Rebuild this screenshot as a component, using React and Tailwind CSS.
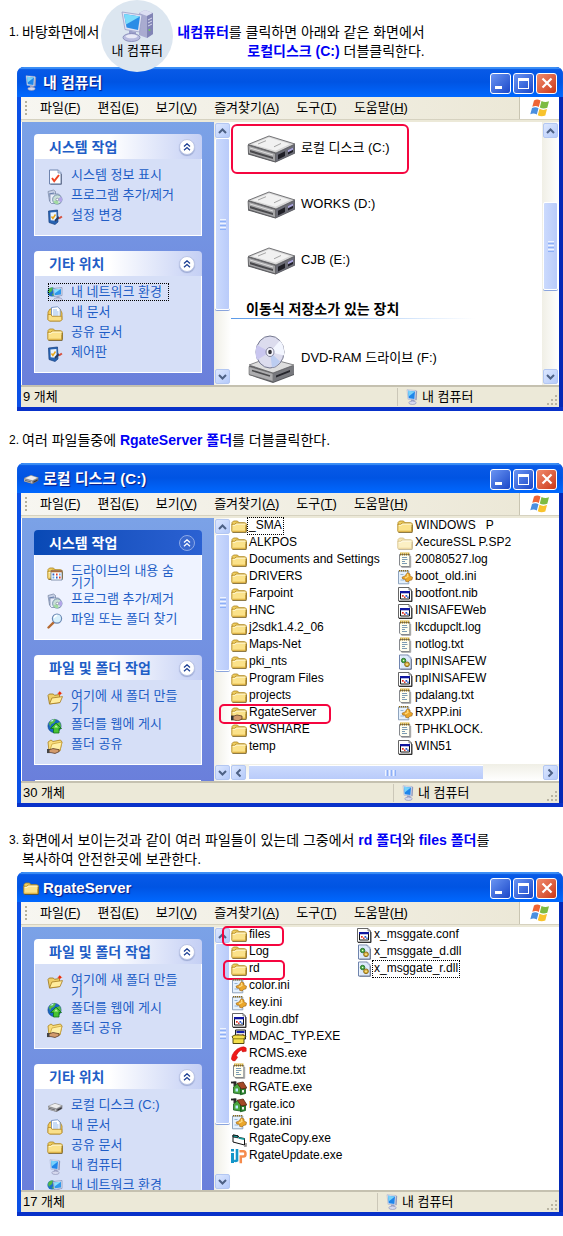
const menus = [
  ['파일', 'F'],
  ['편집', 'E'],
  ['보기', 'V'],
  ['즐겨찾기', 'A'],
  ['도구', 'T'],
  ['도움말', 'H']
];

const computerPanels = [
  {
    title: '시스템 작업',
    links: [
      { icon: 'check', label: '시스템 정보 표시' },
      { icon: 'programs', label: '프로그램 추가/제거' },
      { icon: 'control', label: '설정 변경' }
    ]
  },
  {
    title: '기타 위치',
    links: [
      { icon: 'network', label: '내 네트워크 환경', focused: true },
      { icon: 'documents', label: '내 문서' },
      { icon: 'folder', label: '공유 문서' },
      { icon: 'control', label: '제어판' }
    ]
  }
];

const folderTasks = {
  title: '파일 및 폴더 작업',
  links: [
    { icon: 'newFolder', label: '여기에 새 폴더 만들기' },
    { icon: 'web', label: '폴더를 웹에 게시' },
    { icon: 'share', label: '폴더 공유' }
  ]
};

const diskPanels = [
  {
    title: '시스템 작업',
    primary: true,
    links: [
      { icon: 'hideDrive', label: '드라이브의 내용 숨기기' },
      { icon: 'programs', label: '프로그램 추가/제거' },
      { icon: 'search', label: '파일 또는 폴더 찾기' }
    ]
  },
  folderTasks
];

const serverPanels = [
  folderTasks,
  {
    title: '기타 위치',
    links: [
      { icon: 'drive', label: '로컬 디스크 (C:)' },
      { icon: 'documents', label: '내 문서' },
      { icon: 'folder', label: '공유 문서' },
      { icon: 'computer', label: '내 컴퓨터' },
      { icon: 'network', label: '내 네트워크 환경' }
    ]
  }
];

const diskFolders = [
  { icon: 'folder', name: '_SMA', focused: true },
  { icon: 'folder', name: 'ALKPOS' },
  { icon: 'folder', name: 'Documents and Settings' },
  { icon: 'folder', name: 'DRIVERS' },
  { icon: 'folder', name: 'Farpoint' },
  { icon: 'folder', name: 'HNC' },
  { icon: 'folder', name: 'j2sdk1.4.2_06' },
  { icon: 'folder', name: 'Maps-Net' },
  { icon: 'folder', name: 'pki_nts' },
  { icon: 'folder', name: 'Program Files' },
  { icon: 'folder', name: 'projects' },
  { icon: 'sharedFolder', name: 'RgateServer', ring: '-left-3 w-28' },
  { icon: 'folder', name: 'SWSHARE' },
  { icon: 'folder', name: 'temp' }
];

const diskFiles = [
  { icon: 'folder', name: 'WINDOWS   P' },
  { icon: 'paleFolder', name: 'XecureSSL P.SP2' },
  { icon: 'note', name: '20080527.log' },
  { icon: 'ini', name: 'boot_old.ini' },
  { icon: 'app', name: 'bootfont.nib' },
  { icon: 'app', name: 'INISAFEWeb' },
  { icon: 'note', name: 'lkcdupclt.log' },
  { icon: 'note', name: 'notlog.txt' },
  { icon: 'dll', name: 'npINISAFEW' },
  { icon: 'app', name: 'npINISAFEW' },
  { icon: 'note', name: 'pdalang.txt' },
  { icon: 'ini', name: 'RXPP.ini' },
  { icon: 'note', name: 'TPHKLOCK.' },
  { icon: 'app', name: 'WIN51' }
];

const serverFiles = [
  { icon: 'folder', name: 'files', ring: '-left-[9px] w-[62px]' },
  { icon: 'folder', name: 'Log' },
  { icon: 'folder', name: 'rd', ring: '-left-2 w-[62px]' },
  { icon: 'ini', name: 'color.ini' },
  { icon: 'ini', name: 'key.ini' },
  { icon: 'app', name: 'Login.dbf' },
  { icon: 'setup', name: 'MDAC_TYP.EXE' },
  { icon: 'phone', name: 'RCMS.exe' },
  { icon: 'note', name: 'readme.txt' },
  { icon: 'house', name: 'RGATE.exe' },
  { icon: 'house', name: 'rgate.ico' },
  { icon: 'ini', name: 'rgate.ini' },
  { icon: 'copy', name: 'RgateCopy.exe' },
  { icon: 'update', name: 'RgateUpdate.exe' }
];

const serverLibraries = [
  { icon: 'app', name: 'x_msggate.conf' },
  { icon: 'dll', name: 'x_msggate_d.dll' },
  { icon: 'dll', name: 'x_msggate_r.dll', focused: true }
];

const folderShape = (
  <>
    <path d="M1 4.5 2.5 3h4L8 4.8h5.5V7H1z" fill="#f0cf62" stroke="#a9821c" strokeWidth=".8" />
    <path d="M.8 6.3h3l1-1.2h9.6q.9 0 .9.9v7q0 1-1 1H1.8q-1 0-1-1z" fill="#fbe28a" stroke="#b48a20" strokeWidth=".9" />
    <path d="M1.8 7.3h2.5l1-1.2h9" fill="none" stroke="#fffbe0" strokeWidth=".9" />
    <path d="M2 13.2h12.6V9" fill="none" stroke="#dfb040" strokeWidth=".9" />
    <path d="M1.5 14.5h13.7V7" fill="none" stroke="#5b4510" strokeWidth=".6" />
  </>
);

const pageShape = (
  <>
    <path d="M2.5 1h8.8L14 3.8V15H2.5z" fill="#fff" stroke="#6f84ae" />
    <path d="M11 1v3h3" fill="#d3def2" stroke="#6f84ae" strokeWidth=".7" />
    <path d="M3.5 15.3h11V5" fill="none" stroke="#44516b" strokeWidth=".6" />
  </>
);

const computerShape = (
  <>
    <path d="m11.500 1.200 1.700 1-.6 9-1.600-.2z" fill="#8f95b8" />
    <path d="m3 .7 9 .8-.7 9.700-7.300-.9z" fill="#dfe4f4" stroke="#a1a9c6" strokeWidth=".5" />
    <path d="m4 1.800 7 .7-.6 7.500-5.700-.8z" fill="#1f86ea" />
    <path d="m4 1.800 7 .7-6.400 4.900z" fill="#78d2fa" />
    <path d="M7 10.500h3.500v3H7z" fill="#9fa4c6" />
    <ellipse cx="8.500" cy="13.800" rx="3.700" ry="1.700" fill="#d6d9ee" stroke="#878db2" strokeWidth=".6" />
  </>
);

const driveShape = (
  <>
    <path d="m1 7.5 7-3 7.3 2.3v3L9.5 13 1 10.4z" fill="#77777c" />
    <path d="m1 7.3 7-3 7.3 2.4-5.9 3z" fill="#ededed" stroke="#858585" strokeWidth=".5" />
    <path d="m1.1 7.9 8.2 2.3v2.4l-8.2-2.4z" fill="#b8b8bb" />
    <path d="m2 9.3 6 1.7" stroke="#4b4b4d" strokeWidth=".7" />
    <path d="m10.5 10.4 4-2v1.4l-4 2z" fill="#30303a" />
  </>
);

const globeShape = (
  <>
    <circle cx="7.5" cy="8" r="6.6" fill="#1766c4" stroke="#114487" strokeWidth=".6" />
    <path d="M2 5q3-5 7-3.5L7 5 4.5 6 3 9zM8 6l5-2 1 4-2 4-3-2z" fill="#59bc42" />
    <path d="M3 3.6q2-2 4-2L5.4 3.5z" fill="#c4efff" />
  </>
);

const glyphs = {
  folder: folderShape,
  paleFolder: <g opacity=".5">{folderShape}</g>,
  sharedFolder: (
    <>
      {folderShape}
      <path d="M0 11h3l3-1 5 1v3l-4 2-4-1H0z" fill="#d39b6d" stroke="#4b2c1b" strokeWidth=".7" />
      <path d="M0 10.8h2.5V15H0z" fill="#333" />
    </>
  ),
  share: (
    <>
      <path d="m1 4 3-2 2 1.5L13.5 2 15 4l-2 9-11 .5z" fill="#f9dd7b" stroke="#ac841e" strokeWidth=".8" />
      <path d="m3 12 2-6 10-2-2 8z" fill="#fff0a8" stroke="#c49b32" strokeWidth=".7" />
      <path d="M0 11.5h3l3-1 6 1.2v2L8 15.5 4 14.6H0z" fill="#d39b6d" stroke="#4b2c1b" strokeWidth=".7" />
      <path d="M0 11h2.5v4H0z" fill="#444" />
    </>
  ),
  newFolder: (
    <>
      <path d="M1 5.5 2.3 4h4l1.2 1.3 5-.8v8L2.5 14z" fill="#efcf68" stroke="#997318" strokeWidth=".8" />
      <path d="m2.5 14 2.4-6 10.6-1.4-2.5 6z" fill="#ffec9c" stroke="#a67b20" strokeWidth=".8" />
      <path d="m12.8.8.9 1.7 1.8.8-1.8.8-.9 1.8-.9-1.8-1.8-.8 1.8-.8z" fill="#ff5b20" />
      <circle cx="12.8" cy="3.3" r="1.2" fill="#e22a13" />
    </>
  ),
  documents: (
    <>
      <path d="M1 6 3 3h10l2 4v6.5L13.5 15h-11L1 13.5z" fill="#f4ca59" stroke="#a9801d" strokeWidth=".8" />
      <path d="m4.5 1.5 6-.7 2.7 2.4v8.3H4.5z" fill="#fff" stroke="#6685bb" strokeWidth=".8" />
      <path d="M6 4h4M6 6h5.5M6 8h5.5M6 10h5.5" stroke="#86b1ec" strokeWidth=".9" />
      <path d="M1 8.5h3l1 1.8h9.8v3.3L13.5 15h-11L1 13.5z" fill="#fae08a" stroke="#b78b25" strokeWidth=".8" />
    </>
  ),
  hideDrive: (
    <>
      {folderShape}
      <path d="M4 5.5h11V15H4z" fill="#fff" stroke="#546789" strokeWidth=".7" />
      <path d="M4 5.3h11v2H4z" fill="#a96c3a" />
      <path d="M5.5 8.5h1.8v2H5.5zM9 11.5h1.6v2H9z" fill="#2860cb" />
      <path d="M9 8.5h1.6v2H9zM12 11.5h1.6v2H12z" fill="#df3d29" />
      <path d="M12 8.5h1.6v2H12zM5.5 11.5h1.8v2H5.5z" fill="#63a8ee" />
    </>
  ),
  check: (
    <>
      {pageShape}
      <path d="m5 9 2.2 3L12 6" fill="none" stroke="#ef4423" strokeWidth="2" />
    </>
  ),
  programs: (
    <>
      <path d="M1 2.5 6.5 1l2 1.5V11l-6 1z" fill="#c8d1e5" stroke="#7484a2" strokeWidth=".7" />
      <path d="m2 5 5-1M2.3 7l4.7-.8" stroke="#6782b4" />
      <path d="M3 5h8.5l1.5 1.5v8H4.5L3 13z" fill="#e9eefa" stroke="#6c7da0" strokeWidth=".7" />
      <circle cx="10.3" cy="10.5" r="4.7" fill="#c9e0d8" stroke="#6582a0" strokeWidth=".8" />
      <path d="m10.3 10.5 3.7-3a4.7 4.7 0 0 1 0 6z" fill="#b3a7e8" />
      <path d="m10.3 10.5-4 2.3a4.7 4.7 0 0 0 5 2.2z" fill="#a1dba0" />
      <circle cx="10.3" cy="10.5" r="1.3" fill="#fff" stroke="#6d7890" strokeWidth=".6" />
    </>
  ),
  control: (
    <>
      <path d="m1.5 2 9-1 .5 12-3 2.5-6-2z" fill="#2763b3" stroke="#163f7f" strokeWidth=".7" />
      <path d="m3.4 3.5 6-.6.3 9-6-.6z" fill="#eaf4ff" />
      <path d="m4.5 7.5 1.4 2 2.6-4" fill="none" stroke="#e7a51c" strokeWidth="1.5" />
      <path d="m8 12 4-4" stroke="#253b63" strokeWidth="2.2" />
      <path d="m11.5 8.8 2.8-2 1.2 1.5-3 2z" fill="#d6503d" />
    </>
  ),
  network: (
    <>
      <circle cx="5" cy="6" r="4.6" fill="#1c70c8" />
      <path d="M1 5q1-4 5-3.5L5 5 3 6.5 2 8zM5 8l3-1-2 3.5z" fill="#54ba43" />
      <path d="m6 2.5 9-1v8l-8 1z" fill="#d9e0f3" stroke="#7984aa" strokeWidth=".6" />
      <path d="m7 3.5 7-.8v5.9L7.7 9.3z" fill="#2f98ec" />
      <path d="m7 3.5 7-.8-6.5 4.8z" fill="#8fe0fb" />
      <path d="M9.5 10h3v2.5h-3z" fill="#a7abca" />
      <ellipse cx="11" cy="13.5" rx="4.3" ry="1.7" fill="#d5d8ed" stroke="#858bb0" strokeWidth=".6" />
    </>
  ),
  web: (
    <>
      {globeShape}
      <path d="m9 5 5.5 5.5H12V15H6.5v-4.5h-3z" fill="#48c332" stroke="#12711c" strokeWidth=".8" />
      <path d="m9 7 2.2 2.5h-4z" fill="#bdf4a0" />
    </>
  ),
  search: (
    <>
      <path d="m6.7 9.3-5.2 5.2" stroke="#b56a32" strokeWidth="2.4" strokeLinecap="round" />
      <circle cx="10" cy="5.6" r="4.6" fill="#d7f0fc" stroke="#6c89b4" strokeWidth="1.2" />
      <path d="M7.2 5a3 3 0 0 1 3-2.5" stroke="#fff" strokeWidth="1.4" fill="none" />
    </>
  ),
  computer: computerShape,
  drive: driveShape,
  note: (
    <>
      <path d="M2.5 2.5h10.3v12H4L2.5 13z" fill="#fffef0" stroke="#777a80" strokeWidth=".9" />
      <path d="M3 2.3h9.5" stroke="#8a6a1a" strokeWidth="2.2" strokeDasharray="1.2 .8" />
      <path d="M3 1h9.5" stroke="#e0b83c" strokeWidth="1" />
      <path d="M5 5.5h5M5 7.5h5.5M5 9.5h3M5 11.5h5" stroke="#6d90ab" strokeWidth=".9" />
      <path d="M13.7 4v11.3H4.5" fill="none" stroke="#8b8b8b" strokeWidth=".8" />
    </>
  ),
  ini: (
    <>
      <path d="M1.5 2h10.3v12.8H1.5z" fill="#e5f1fd" stroke="#8299b5" strokeWidth=".9" />
      <path d="M2 1.7h9.5" stroke="#8a6a1a" strokeWidth="1.6" strokeDasharray="1.2 .8" />
      <path d="M3.5 5.5h3M3.5 11h4" stroke="#94b5d7" />
      <path d="m10.500 3.500 2.500 1.500v2l2.500 1.200-.5 2.600-2.500.7-1.500 1.500-2.500-.8.3-1.700-3-.5-.8-1.800 2.700-1 1-1.200z" fill="#eba72c" stroke="#965e12" strokeWidth=".6" />
      <path d="m10.500 5 .5 2.500L8 9" fill="none" stroke="#ffe08a" strokeWidth="1.100" />
    </>
  ),
  app: (
    <>
      <path d="M1.5 1.5H12L14.5 4v11h-13z" fill="#fff" stroke="#555" strokeWidth=".9" />
      <path d="M12 1.5V4h2.5" fill="none" stroke="#555" strokeWidth=".7" />
      <path d="M3.5 5.5h9v7.5h-9z" fill="#fff" stroke="#111" />
      <path d="M3 5h10v2.3H3z" fill="#1017a0" />
      <path d="M5 9h1.7v1.7H5zM7 10.5h1.5V12H7z" fill="#e33425" />
      <path d="M8.5 9h1.7v1.7H8.5zM10.3 10.5h1.4V12h-1.4z" fill="#2458cd" />
      <path d="M2 15.5h13V5" fill="none" stroke="#222" strokeWidth=".9" />
    </>
  ),
  dll: (
    <>
      {pageShape}
      <path d="M3.5 2h7l2.5 2.5V14H3.5z" fill="#dceafc" />
      <circle cx="6.6" cy="6.5" r="2.2" fill="#52ad45" stroke="#226d2b" strokeWidth=".9" />
      <circle cx="6.6" cy="6.5" r=".7" fill="#e8ffe0" />
      <circle cx="10" cy="10.3" r="2.4" fill="#d8b239" stroke="#876417" strokeWidth=".9" />
      <circle cx="10" cy="10.3" r=".8" fill="#fff3bd" />
    </>
  ),
  setup: (
    <>
      <path d="M4.5 1h10v9h-10z" fill="#e3e3e3" stroke="#222" />
      <path d="M5.5 2h8v2h-8z" fill="#1420a8" />
      <path d="M6 5.5h2v2H6zM11 5.5h2v2h-2z" fill="#cb3a2a" />
      <path d="M1 7.5 4 6h8l3 1.5-2 2v5H2v-5z" fill="#f5df4a" stroke="#433b00" strokeWidth=".9" />
      <path d="M2 9.8h11" stroke="#8f8212" />
    </>
  ),
  phone: (
    <path
      d="M10 1.2q3-1 5.2.7v3.4l-3.6.6-1.2-2Q7 5.6 5.3 9.4l1.3 2-2.5 3.4Q1.5 15.5.3 13q.3-4 3-7.3T10 1.2z"
      fill="#ef1a19"
      stroke="#bd0909"
      strokeWidth=".5"
    />
  ),
  house: (
    <>
      <path d="M2.5 1.5h3v5h-3z" fill="#333" />
      <path d="M0 2.5h5" stroke="#222" strokeWidth="1.8" />
      <path d="m2.5 7 4-3.5 3 4V14l-7-1z" fill="#49a53e" stroke="#145a1c" strokeWidth=".8" />
      <path d="M9.5 8h5v5.5l-5 1.3z" fill="#28812b" stroke="#145a1c" strokeWidth=".8" />
      <path d="m6.2 3.2 6-1.2 3.7 6-5.5.9z" fill="#a44927" stroke="#552412" strokeWidth=".8" />
      <path d="M4.5 8.5H7v3H4.5z" fill="#b8ecff" />
      <path d="M11 10h2v2.5h-2z" fill="#eee" />
    </>
  ),
  copy: (
    <>
      <path d="m2 4 5 .8 1 1.700 5.500 1V14L2 11z" fill="#fff" stroke="#111" />
      <path d="m2 4 5 .8v2L2 6z" fill="#15a0a0" stroke="#111" strokeWidth=".8" />
      <path d="m7.500 7 6 1.200" stroke="#15a0a0" strokeWidth="1.600" />
      <path d="M13 15h2v-3" stroke="#888" strokeWidth="1.5" fill="none" />
    </>
  ),
  update: (
    <>
      <path d="M0 5h3v10H0zM0 1h3v2.500H0z" fill="#1496c9" />
      <path d="M3 12.500q1.700 1 3 0V1" fill="none" stroke="#1496c9" strokeWidth="2.600" />
      <path d="M9.8 15.3V8.5h2.5q2.2 0 2.2-2.6t-2.2-2.6H8.500" fill="none" stroke="#f58b4c" strokeWidth="2.5" />
    </>
  )
};

function Icon({ name, className = 'size-4' }) {
  return (
    <svg viewBox="0 0 16 16" className={`${className} shrink-0`} aria-hidden="true">
      {glyphs[name]}
    </svg>
  );
}

function DesktopComputer() {
  return (
    <svg viewBox="0 0 36 34" className="h-[34px] w-9" aria-hidden="true">
      <path d="m20 4 6-3 8 3v21l-6 4-8-3z" fill="#a9abd0" />
      <path d="m20 4 6-3 8 3-6 3z" fill="#dcdef2" />
      <path d="m28 7 6-3v21l-6 4z" fill="#8184b5" />
      <path d="m29 11 4-2M29 14l4-2M29 17l4-2" stroke="#d9daf0" />
      <circle cx="30.5" cy="21" r="1" fill="#6fce54" />
      <path d="m3 3 20 3-2.5 17L6 20.500z" fill="#dfe2f4" stroke="#9a9ec6" strokeWidth=".8" />
      <path d="m5 5 16 2.500L19 21 7.500 18.500z" fill="#2b8de6" />
      <path d="m5 5 16 2.500L7 15.500z" fill="#7bdcfb" />
      <path d="M10 21.500 17 23v6h-7z" fill="#9c9fca" />
      <ellipse cx="12.500" cy="28.500" rx="8.500" ry="4" fill="#b9bce0" stroke="#8285b4" strokeWidth=".8" />
      <ellipse cx="12.500" cy="27.300" rx="6" ry="2" fill="#e9eaf7" />
    </svg>
  );
}

function LargeDrive() {
  return (
    <svg viewBox="0 0 48 28" className="h-7 w-12 shrink-0" aria-hidden="true">
      <path d="M1 10v9.500L28.500 27.500 48 18.500V9z" fill="#55565a" />
      <path d="M1 9.500 22 1l26 8-19 9z" fill="#d6d6d6" stroke="#66666a" strokeWidth=".9" />
      <path d="M5 9.200 22 2.500 43 9 28.500 15.800z" fill="#f1f1f1" />
      <path d="m11 9 8-3.300M34 8.500l-7 3.300" stroke="#a5a5a5" />
      <path d="M1 10.200 28.500 18.500v8.300L1.500 18.500z" fill="#a6a6a8" stroke="#5d5d60" strokeWidth=".7" />
      <path d="m3 15 23 7v2L3 17.200z" fill="#4a4a4d" />
      <path d="m3 13 23 7" stroke="#dedede" />
      <path d="m29 18.500 18.500-8.800v8.500L29 26.800z" fill="#6c6d76" />
      <path d="m31 19.800 7-3.500v4.600l-7 3.500zM41 15l5-2.500V17l-5 2.500z" fill="#1f1f26" />
      <path d="m41 15 5-2.500v2.300l-5 2.500z" fill="#a9a4dc" />
    </svg>
  );
}

function DiscDrive() {
  return (
    <svg viewBox="0 0 48 48" className="size-12 shrink-0" aria-hidden="true">
      <path d="M2 31v9l24 8 21-8v-9z" fill="#58595d" />
      <path d="m2 30 19-7 26 7-21 8z" fill="#dedede" stroke="#68686b" strokeWidth=".8" />
      <path d="M2 31.500 26 38.500v8L2 39.500z" fill="#adadaf" stroke="#666" strokeWidth=".6" />
      <path d="m26 38.500 21-8v8.500l-21 8z" fill="#77787d" />
      <path d="m5 35.500 18 5.500" stroke="#4a4a4c" strokeWidth="1.500" />
      <path d="m29 40.500 14-5.500v2l-14 5.500z" fill="#26262c" />
      <ellipse cx="23" cy="17" rx="14" ry="16" fill="#dcdcee" stroke="#74778f" />
      <path d="m23 17 10-11.500q5 6 4 15z" fill="#f3f6ff" />
      <path d="M23 17 10 25q-3-8 0-15z" fill="#c9c6ef" />
      <path d="m23 17 2 15.500q5-1 8-6z" fill="#bccdf1" />
      <ellipse cx="23" cy="17" rx="4" ry="4.500" fill="#f7f7ff" stroke="#82839b" />
      <ellipse cx="23" cy="17" rx="1.800" ry="2.200" fill="#35353c" />
    </svg>
  );
}

function WindowsFlag() {
  return (
    <svg viewBox="0 0 20 20" className="size-5" aria-hidden="true">
      <path d="M4 2.500q3-2 6.500 0L8.800 9Q6 7 2.300 8.800z" fill="#ef6536" />
      <path d="M11.500 3q3.500 2 7.500.3L17.300 9.800q-4 1.700-7.500-.2z" fill="#7dbb42" />
      <path d="M2 10q3.500-1.800 6.500.2L6.800 16.500Q3.500 14.800.3 16.300z" fill="#4a8fe0" />
      <path d="M9.500 10.800q3.500 2 7.500.3l-1.700 6.400q-4 1.700-7.500-.3z" fill="#f8c32c" />
    </svg>
  );
}

function Chevron({ className = '' }) {
  return (
    <svg viewBox="0 0 9 6" className={`h-1.5 w-[9px] ${className}`} aria-hidden="true">
      <path d="m1 5 3.500-3.500L8 5" fill="none" stroke="#4d6185" strokeWidth="2" />
    </svg>
  );
}

function ScrollButton({ label, turn }) {
  return (
    <button
      type="button"
      aria-label={label}
      className="flex size-[15px] shrink-0 items-center justify-center rounded-[2px] border border-[#b3c7f2] bg-linear-to-br from-[#dce7fe] to-[#b5cafa]"
    >
      <Chevron className={turn} />
    </button>
  );
}

function VerticalScroll({ thumb }) {
  return (
    <div className="flex w-[17px] shrink-0 flex-col items-center justify-between bg-linear-to-r from-[#f0efe6] to-white py-px">
      <ScrollButton label="위로" />
      <div className="flex w-[15px] grow flex-col">
        <div className={`flex flex-col items-center justify-center gap-px rounded-[2px] border border-white bg-linear-to-r from-[#cbdafd] to-[#b9cbfa] shadow-[0_1px_0_#8aa4dd] ${thumb}`}>
          <i className="h-px w-1.5 bg-[#eef4fe]" />
          <i className="h-px w-1.5 bg-[#8cb0f8]" />
          <i className="h-px w-1.5 bg-[#eef4fe]" />
          <i className="h-px w-1.5 bg-[#8cb0f8]" />
          <i className="h-px w-1.5 bg-[#eef4fe]" />
          <i className="h-px w-1.5 bg-[#8cb0f8]" />
        </div>
      </div>
      <ScrollButton label="아래로" turn="rotate-180" />
    </div>
  );
}

function HorizontalScroll() {
  return (
    <div className="flex h-[17px] items-center bg-linear-to-b from-[#f0efe6] to-white pr-px">
      <ScrollButton label="왼쪽으로" turn="-rotate-90" />
      <div className="mr-[60px] ml-[3px] flex h-[15px] grow items-center justify-center gap-px border-y border-white bg-linear-to-b from-[#cbdafd] to-[#b9cbfa] pl-12">
        <i className="h-1.5 w-px bg-[#eef4fe]" />
        <i className="h-1.5 w-px bg-[#8cb0f8]" />
        <i className="h-1.5 w-px bg-[#eef4fe]" />
        <i className="h-1.5 w-px bg-[#8cb0f8]" />
        <i className="h-1.5 w-px bg-[#eef4fe]" />
        <i className="h-1.5 w-px bg-[#8cb0f8]" />
      </div>
      <ScrollButton label="오른쪽으로" turn="rotate-90" />
    </div>
  );
}

function TaskPanel({ title, primary, links }) {
  return (
    <section className="mb-[15px]">
      <h3
        className={
          primary
            ? 'flex h-[25px] items-center justify-between rounded-t-[4px] bg-linear-to-r from-[#0849b5] to-[#2b61d2] pr-[7px] pl-[15px] text-sm font-bold text-white'
            : 'flex h-[25px] items-center justify-between rounded-t-[4px] bg-linear-to-r from-white from-45% to-[#c4cff4] pr-[7px] pl-[15px] text-sm font-bold text-[#215dc6]'
        }
      >
        {title}
        <button
          type="button"
          aria-label={`${title} 접기`}
          className={
            primary
              ? 'flex size-4 items-center justify-center rounded-full border border-[#8ca9e8] bg-[#3a69cf] text-white'
              : 'flex size-4 items-center justify-center rounded-full border border-[#bcc6e6] bg-white text-[#1c3f93] shadow-[0_1px_1px_#9aa8d2]'
          }
        >
          <svg viewBox="0 0 8 8" className="size-2" aria-hidden="true">
            <path d="m1 3.500 3-2.700 3 2.700M1 7.300l3-2.700 3 2.700" fill="none" stroke="currentColor" strokeWidth="1.300" />
          </svg>
        </button>
      </h3>
      <ul className={`border border-t-0 border-white pt-1.5 pr-[19px] pb-2.5 pl-3 ${primary ? 'bg-[#eff3ff]' : 'bg-[#d6dff7]'}`}>
        {links.map((link) => (
          <li key={link.label}>
            <a
              href="#"
              className={`flex min-h-5 gap-2 pt-1 text-[13px] leading-3 break-all text-[#215dc6] ${
                link.focused ? 'w-fit pr-2 outline-1 -outline-offset-2 outline-dotted outline-black' : ''
              }`}
            >
              <Icon name={link.icon} />
              <span>{link.label}</span>
            </a>
          </li>
        ))}
      </ul>
    </section>
  );
}

function ExplorerWindow({ icon, title, count, panels, morePanels, thumb, statusWidth, children }) {
  return (
    <article className="ml-[17px] overflow-hidden rounded-t-[7px] border-b-4 border-[#0831c9] bg-linear-to-r from-[#0b50e6] to-[#0529b5]">
      <header className="flex h-[30px] items-center bg-linear-to-b from-[#0a5be8] via-[#0054e3] to-[#0068ff] pt-0.5 pr-1.5 pl-1.5 shadow-[inset_0_2px_1px_#3d8ff5]">
        <Icon name={icon} />
        <h2 className="ml-1 grow text-[15px] leading-5 font-bold text-white [text-shadow:1px_1px_1px_#0a1883]">{title}</h2>
        <div className="flex gap-0.5">
          <button type="button" aria-label="최소화" className="flex size-[21px] items-end rounded-[3px] border border-white bg-linear-to-br from-[#6b94f2] to-[#1c46c8] pb-1 pl-1">
            <i className="h-[3px] w-[7px] bg-white" />
          </button>
          <button type="button" aria-label="최대화" className="flex size-[21px] items-center justify-center rounded-[3px] border border-white bg-linear-to-br from-[#6b94f2] to-[#1c46c8]">
            <i className="h-[11px] w-[11px] border border-t-[3px] border-white" />
          </button>
          <button type="button" aria-label="닫기" className="flex size-[21px] items-center justify-center rounded-[3px] border border-white bg-linear-to-br from-[#f08a6c] to-[#cb3511]">
            <svg viewBox="0 0 12 12" className="size-3" aria-hidden="true">
              <path d="m1.500 1.500 9 9m0-9-9 9" stroke="#fff" strokeWidth="2.200" />
            </svg>
          </button>
        </div>
      </header>
      <div className="mx-1 bg-[#ece9d8]">
        <div className="flex h-[22px] bg-linear-to-r from-[#f7f6f1] to-[#ebe7d5]">
          <svg viewBox="0 0 3 16" className="mt-1 ml-1 h-4 w-[3px]" aria-hidden="true">
            <path d="M1 0v16" stroke="#b4b09c" strokeWidth="2" strokeDasharray="2 2" />
          </svg>
          <nav className="flex grow gap-[17px] pl-3 text-[13px] whitespace-nowrap">
            {menus.map(([name, key]) => (
              <button type="button" key={key} className="leading-[22px]">
                {name}(<u>{key}</u>)
              </button>
            ))}
          </nav>
          <div className="flex w-10 items-center justify-center border-l border-[#c9c5b2] bg-white">
            <WindowsFlag />
          </div>
        </div>
        <div className="h-[3px] border-t border-[#d6d2c0]" />
        <div className="flex h-[263px] bg-white">
          <aside className="ml-px w-48 shrink-0 overflow-hidden bg-linear-to-b from-[#7ba2e7] to-[#6a7fdb] px-3 pt-3">
            {panels.map((panel) => (
              <TaskPanel key={panel.title} {...panel} />
            ))}
            {morePanels && <div className="mx-px h-px bg-white" />}
          </aside>
          <VerticalScroll thumb={thumb} />
          {children}
        </div>
        <footer className="flex h-[22px] items-center justify-between border-t-2 border-[#c5c1b0] text-[13px] leading-5">
          <span className="pl-0.5">{count}</span>
          <div className={`flex h-[18px] items-center border-l border-[#cbc7b8] pl-1.5 ${statusWidth}`}>
            <Icon name="computer" />
            <span className="ml-0.5 grow">내 컴퓨터</span>
            <svg viewBox="0 0 12 12" className="mt-1.5 mr-px size-3" aria-hidden="true">
              <path d="M9 1h2v2H9zM5 5h2v2H5zM9 5h2v2H9zM1 9h2v2H1zM5 9h2v2H5zM9 9h2v2H9z" fill="#b8b4a2" />
            </svg>
          </div>
        </footer>
      </div>
    </article>
  );
}

function FileList({ files, className }) {
  return (
    <ul className={className}>
      {files.map((file, index) => (
        <li key={index} className="relative flex h-[17px] text-xs leading-[15px] whitespace-pre">
          <Icon name={file.icon} />
          <span className={`ml-px px-px ${file.focused ? 'h-4 outline-1 outline-dotted outline-black' : ''}`}>{file.name}</span>
          {file.ring && <i className={`absolute -top-px h-5 rounded-[5px] border-2 border-[#f5053f] ${file.ring}`} />}
        </li>
      ))}
    </ul>
  );
}

function DriveTile({ label, disc, className = '' }) {
  return (
    <li className={`flex h-12 items-center gap-1.5 pl-4 ${className}`}>
      {disc ? <DiscDrive /> : <LargeDrive />}
      <span className="pb-1">{label}</span>
    </li>
  );
}

export default function App() {
  return (
    <main className="bg-white pb-5 text-sm leading-[19px] text-black [font-family:'Liberation_Sans','Noto_Sans_CJK_KR',sans-serif]">
      <div className="relative z-10 -mb-[5px] flex items-start pl-[9px] whitespace-nowrap">
        <p className="mt-[23px] mr-0.5 flex">
          <span className="w-[13px] text-xs leading-[19px]">1.</span>바탕화면에서
        </p>
        <figure className="flex size-[72px] flex-col items-center rounded-full bg-[#dce6f0] pt-[9px]">
          <DesktopComputer />
          <figcaption className="text-[13px] leading-4">내 컴퓨터</figcaption>
        </figure>
        <p className="mt-[23px] ml-1 text-right">
          <b className="text-[#0000f5]">내컴퓨터</b>를 클릭하면 아래와 같은 화면에서
          <br />
          <b className="text-[#0000f5]">로컬디스크 (C:)</b> 더블클릭한다.
        </p>
      </div>

      <ExplorerWindow icon="computer" title="내 컴퓨터" count="9 개체" panels={computerPanels} thumb="h-[172px]" statusWidth="w-[162px]">
        <div className="grow pt-[3px] text-[13px]">
          <ul className="flex flex-col gap-2">
            <DriveTile label="로컬 디스크 (C:)" className="ml-px w-44 rounded-[5px] pl-[15px] outline-2 -outline-offset-1 outline-[#f5053f]" />
            <DriveTile label="WORKS (D:)" />
            <DriveTile label="CJB (E:)" />
          </ul>
          <h3 className="mt-4 pl-[15px] text-sm leading-4 font-bold">이동식 저장소가 있는 장치</h3>
          <div className="mt-px h-px w-[244px] bg-linear-to-r from-[#5a9ae8] to-white" />
          <ul className="pt-4">
            <DriveTile label="DVD-RAM 드라이브 (F:)" disc />
          </ul>
        </div>
        <VerticalScroll thumb="mt-16 h-[88px]" />
      </ExplorerWindow>

      <p className="mt-5 mb-[13px] flex pl-[9px]">
        <span className="w-[13px] text-xs leading-[19px]">2.</span>
        <span>
          여러 파일들중에 <b className="text-[#0000f5]">RgateServer 폴더</b>를 더블클릭한다.
        </span>
      </p>

      <ExplorerWindow icon="drive" title="로컬 디스크 (C:)" count="30 개체" panels={diskPanels} morePanels thumb="h-[137px]" statusWidth="w-[166px]">
        <div className="flex grow flex-col justify-between">
          <div className="flex">
            <FileList files={diskFolders} className="w-[166px]" />
            <FileList files={diskFiles} />
          </div>
          <HorizontalScroll />
        </div>
      </ExplorerWindow>

      <p className="mt-6 mb-[3px] flex pl-[9px]">
        <span className="w-[13px] text-xs leading-[19px]">3.</span>
        <span>
          화면에서 보이는것과 같이 여러 파일들이 있는데 그중에서 <b className="text-[#0000f5]">rd 폴더</b>와{' '}
          <b className="text-[#0000f5]">files 폴더</b>를
          <br />
          복사하여 안전한곳에 보관한다.
        </span>
      </p>

      <ExplorerWindow icon="folder" title="RgateServer" count="17 개체" panels={serverPanels} thumb="h-[181px]" statusWidth="w-[182px]">
        <div className="flex grow">
          <FileList files={serverFiles} className="w-[125px]" />
          <FileList files={serverLibraries} />
        </div>
      </ExplorerWindow>
    </main>
  );
}
